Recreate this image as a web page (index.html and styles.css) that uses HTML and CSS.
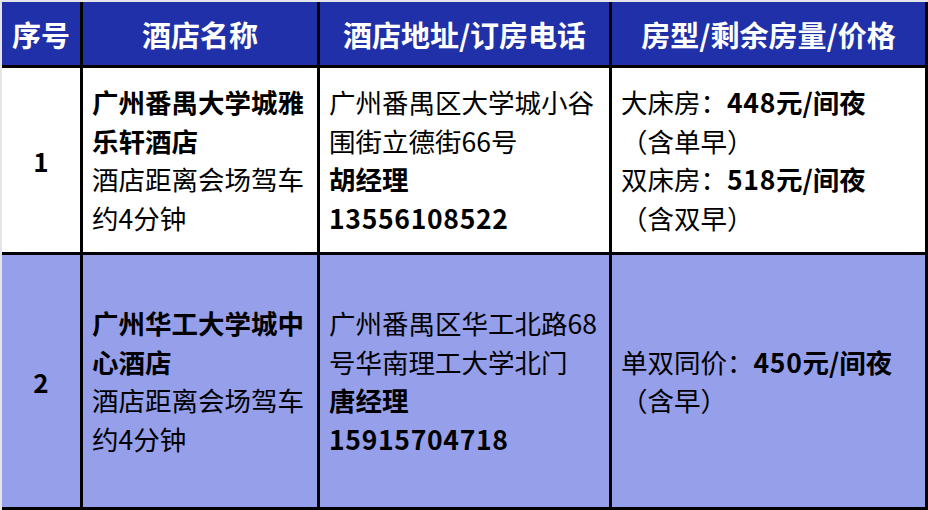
FILE: index.html
```html
<!DOCTYPE html>
<html lang="zh-CN">
<head>
<meta charset="utf-8">
<link rel="stylesheet" href="styles.css">
</head>
<body>
<div class="table">
  <div class="cell head">序号</div>
  <div class="cell head">酒店名称</div>
  <div class="cell head">酒店地址/订房电话</div>
  <div class="cell head">房型/剩余房量/价格</div>

  <div class="cell num">1</div>
  <div class="cell text">
    <div class="lines">
      <b>广州番禺大学城雅</b><br><b>乐轩酒店</b><br>酒店距离会场驾车<br>约4分钟
    </div>
  </div>
  <div class="cell text">
    <div class="lines">
      广州番禺区大学城小谷<br>围街立德街66号<br><b>胡经理</b><br><b class="digits">13556108522</b>
    </div>
  </div>
  <div class="cell text">
    <div class="lines">
      大床房：<b><span class="digits">448</span>元/间夜</b><br>（含单早）<br>双床房：<b><span class="digits">518</span>元/间夜</b><br>（含双早）
    </div>
  </div>

  <div class="cell num alt">2</div>
  <div class="cell text alt">
    <div class="lines">
      <b>广州华工大学城中</b><br><b>心酒店</b><br>酒店距离会场驾车<br>约4分钟
    </div>
  </div>
  <div class="cell text alt">
    <div class="lines">
      广州番禺区华工北路68<br>号华南理工大学北门<br><b>唐经理</b><br><b class="digits">15915704718</b>
    </div>
  </div>
  <div class="cell text alt">
    <div class="lines">
      单双同价：<b><span class="digits">450</span>元/间夜</b><br>（含早）
    </div>
  </div>
</div>
</body>
</html>
```

FILE: styles.css
```css
html, body {
  margin: 0;
  padding: 0;
}

body {
  background: #e4e4ea;
  font-family: "Noto Sans CJK SC", "Noto Sans", sans-serif;
  color: #000;
}

.table {
  margin: 2px 0 0 2px;
  display: grid;
  grid-template-columns: 78px 234px 289px 313px;
  grid-template-rows: 63px 184px 252px;
  gap: 3px;
  padding: 0 3px 3px 0;
  background: #000;
  width: max-content;
}

.cell {
  background: #fff;
  display: flex;
  align-items: center;
}

.cell.alt {
  background: #959fea;
}

.head {
  background: #2030a8;
  color: #fff;
  font-weight: 700;
  font-size: 29px;
  justify-content: center;
  padding-top: 1px;
}

.num {
  justify-content: center;
  font-weight: 700;
  font-size: 26px;
}

.text {
  padding-left: 9px;
  font-size: 26.5px;
  line-height: 38.5px;
}

.text b {
  font-weight: 700;
}

.digits {
  letter-spacing: 0.7px;
}
```
